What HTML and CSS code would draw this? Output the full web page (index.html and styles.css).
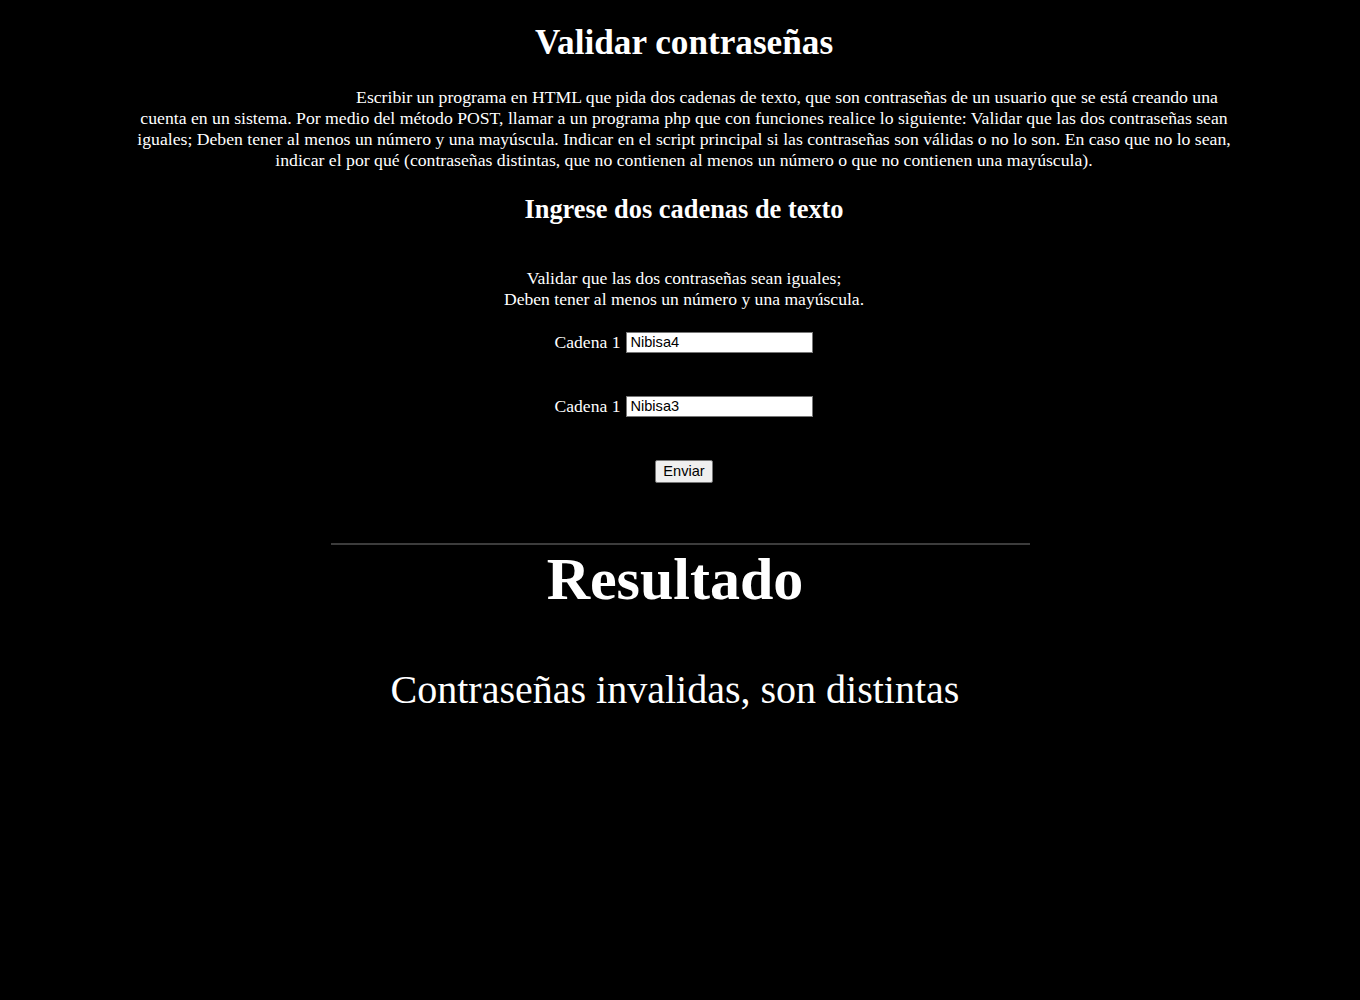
FILE: index.html
```html
<!DOCTYPE html>
<html lang="es">
<head>
<meta charset="utf-8">
<title>Validar contraseñas</title>
<link rel="stylesheet" href="styles.css">
</head>
<body>
<div class="top">
  <h1 class="title">Validar contraseñas</h1>
  <p class="desc">Escribir un programa en HTML que pida dos cadenas de texto, que son contraseñas de un usuario que se está creando una cuenta en un sistema. Por medio del método POST, llamar a un programa php que con funciones realice lo siguiente: Validar que las dos contraseñas sean iguales; Deben tener al menos un número y una mayúscula. Indicar en el script principal si las contraseñas son válidas o no lo son. En caso que no lo sean, indicar el por qué (contraseñas distintas, que no contienen al menos un número o que no contienen una mayúscula).</p>
  <h2 class="subtitle">Ingrese dos cadenas de texto</h2>
  <form class="form">
    <p class="note">Validar que las dos contraseñas sean iguales;<br>Deben tener al menos un número y una mayúscula.</p>
    <div class="row"><label class="label">Cadena 1</label><input class="field" type="text" value="Nibisa4"></div>
    <div class="row row2"><label class="label">Cadena 1</label><input class="field" type="text" value="Nibisa3"></div>
    <div class="row row3"><button class="btn" type="button">Enviar</button></div>
  </form>
</div>
<hr class="rule">
<div class="result">
  <h1 class="res-title">Resultado</h1>
  <h2 class="res-text">Contraseñas invalidas, son distintas</h2>
</div>
</body>
</html>
```
FILE: styles.css
```css
html, body {
  background: #000;
}
body {
  margin: 0;
  color: #fff;
  font-family: "Liberation Serif", "Times New Roman", serif;
  font-size: 17.6px;
  text-align: center;
}
.top {
  padding-left: 8px;
}
.title {
  margin: 23px 0 0;
  font-size: 35.2px;
  line-height: 40px;
  font-weight: bold;
}
.desc {
  width: 1110px;
  margin: 24px auto 0;
  font-size: 17.7px;
  line-height: 21px;
  text-indent: 206px;
}
.subtitle {
  margin: 23px 0 0;
  font-size: 26.4px;
  line-height: 30px;
  font-weight: bold;
}
.form {
  margin: 0;
}
.note {
  margin: 44px 0 0;
  line-height: 21px;
}
.row {
  display: flex;
  justify-content: center;
  align-items: center;
  height: 24px;
  margin-top: 20px;
}
.row2 {
  margin-top: 40px;
}
.row3 {
  margin-top: 41px;
}
.label {
  margin-right: 6px;
}
.field {
  box-sizing: border-box;
  width: 187px;
  height: 21px;
  margin: 0;
  padding: 0 3px;
  border: 1px solid #767676;
  background: #fff;
  color: #000;
  font-family: "Liberation Sans", Arial, sans-serif;
  font-size: 14.6px;
}
.btn {
  box-sizing: border-box;
  width: 58px;
  height: 23px;
  margin: 0;
  padding: 0;
  border: 1px solid #767676;
  border-radius: 2px;
  background: #efefef;
  color: #000;
  font-family: "Liberation Sans", Arial, sans-serif;
  font-size: 14.6px;
}
.rule {
  width: 699px;
  margin: 60px auto 0;
  border: 0;
  height: 2px;
  background: #3c3c3c;
}
.result {
  padding-right: 10px;
}
.res-title {
  margin: 0;
  font-size: 60px;
  line-height: 69px;
  font-weight: bold;
}
.res-text {
  margin: 53px 0 0;
  font-size: 40px;
  line-height: 46px;
  font-weight: normal;
}
```
